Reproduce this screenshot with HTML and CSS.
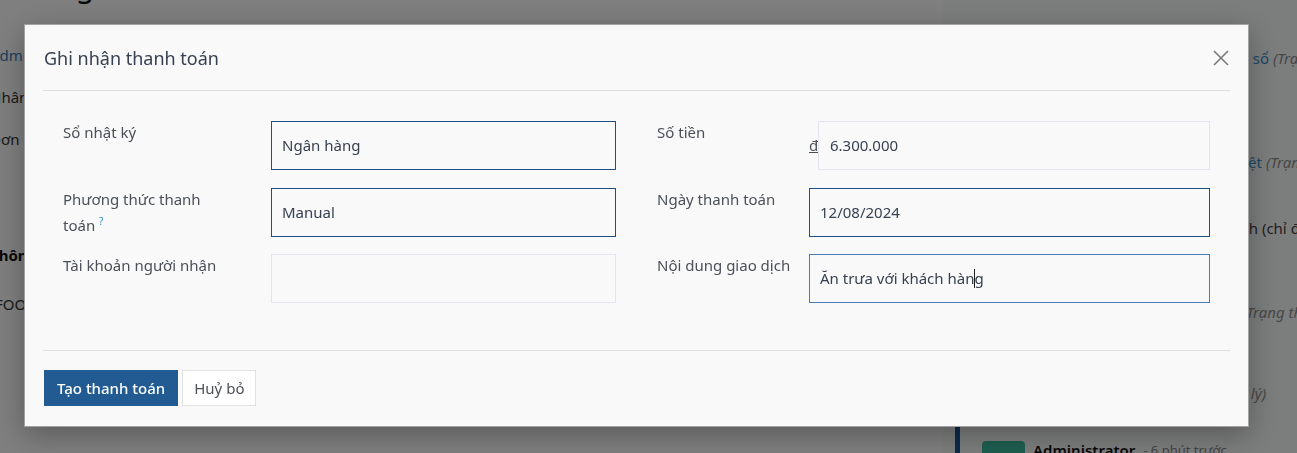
FILE: index.html
```html
<!DOCTYPE html>
<html>
<head>
    <meta charset="utf-8">
    <title>Ghi nhận thanh toán</title>
    <meta name="viewport" content="width=device-width, initial-scale=1.0">
    <link rel="stylesheet" href="styles.css">
</head>
<body>
    <div class="page">
        <div class="main">
            <div class="sheet">
                <h1 class="rec-title">Công tác Hà Tĩnh</h1>
                <p class="rec-line rec-link rec-owner">Administrator</p>
                <p class="rec-line rec-gap">Nhân viên</p>
                <p class="rec-line rec-gap">Đơn nhà cung cấp</p>
                <p class="rec-line rec-bold rec-section">Thông tin mua hàng</p>
                <p class="rec-line rec-gap2">[FOOD] Chi phí ăn uống</p>
            </div>
        </div>
        <div class="chatter">
            <div class="thread">
                <p class="track track-1"><span class="tk-main w1">• Đã phê duyệt → <span class="tk-link">Đã vào sổ</span></span> <em>(Trạng thái)</em></p>
                <p class="track track-2"><span class="tk-main w2">• Đã gửi → <span class="tk-link">Đã phê duyệt</span></span> <em>(Trạng thái)</em></p>
                <p class="track track-3"><span class="tk-main w3">• Còn lại theo ngân sách</span> (chỉ đọc)</p>
                <p class="track track-4"><em><span class="tk-main w4">Bản nháp → Đã gửi</span> (Trạng thái)</em></p>
                <p class="track track-5"><em><span class="tk-main w5">Chi phí nhân viên (Đã xử lý)</span></em></p>
                <div class="author">
                    <span class="avatar"></span>
                    <span class="author-name">Administrator</span>
                    <span class="author-time">- 6 phút trước</span>
                </div>
            </div>
        </div>
    </div>

    <div class="backdrop">
        <div class="dialog">
            <div class="dlg-header">
                <h4 class="dlg-title">Ghi nhận thanh toán</h4>
                <button class="dlg-close" aria-label="Đóng">
                    <svg width="16" height="16" viewBox="0 0 16 16">
                        <path d="M1 1 L15 15 M15 1 L1 15" stroke="#7a7a7a" stroke-width="1.6" fill="none"/>
                    </svg>
                </button>
            </div>

            <div class="dlg-body">
                <div class="grp grp-left">
                    <label class="lbl">Sổ nhật ký</label>
                    <div class="field field-focus">Ngân hàng</div>

                    <label class="lbl">Phương thức thanh toán <sup class="help">?</sup></label>
                    <div class="field field-focus">Manual</div>

                    <label class="lbl">Tài khoản người nhận</label>
                    <div class="field field-muted"></div>
                </div>

                <div class="grp grp-right">
                    <label class="lbl">Số tiền</label>
                    <div class="monetary">
                        <span class="currency">đ</span>
                        <div class="field field-muted">6.300.000</div>
                    </div>

                    <label class="lbl">Ngày thanh toán</label>
                    <div class="field field-focus">12/08/2024</div>

                    <label class="lbl">Nội dung giao dịch</label>
                    <div class="field field-edit">Ăn trưa với khách hàn<span class="caret"></span>g</div>
                </div>
            </div>

            <div class="dlg-footer">
                <button class="btn btn-primary">Tạo thanh toán</button>
                <button class="btn btn-light">Huỷ bỏ</button>
            </div>
        </div>
    </div>
</body>
</html>
```

FILE: styles.css
```css
* {
    box-sizing: border-box;
}
html, body {
    margin: 0;
    height: 100%;
}
body {
    font-family: "Noto Sans", "Open Sans", sans-serif;
    font-size: 15px;
    line-height: 1.5;
    color: #374151;
    background: #fff;
    overflow: hidden;
}

/* page behind the dialog */
.page {
    display: flex;
    height: 453px;
    white-space: nowrap;
}
.main {
    flex: 0 0 943px;
    overflow: hidden;
}
.sheet {
    margin-left: -10px;
}
.rec-title {
    font-size: 30px;
    font-weight: 400;
    line-height: 36px;
    margin: -32px 0 0 30px;
    color: #111;
}
.rec-line {
    margin: 0;
    height: 22px;
    line-height: 22px;
    color: #333;
}
.rec-link {
    color: #3a7fb8;
}
.rec-bold {
    font-weight: 700;
    color: #111;
}
.rec-owner { margin-top: 40px; }
.rec-gap { margin-top: 20px; }
.rec-section { margin-top: 94px; }
.rec-gap2 { margin-top: 27px; }

.chatter {
    flex: 1;
    background: #f9fafb;
    padding-left: 12px;
    overflow: hidden;
}
.thread {
    border-left: 5px solid #1a549a;
    padding-left: 22px;
    height: 100%;
}
.track {
    margin: 0;
    height: 22px;
    line-height: 22px;
    color: #444;
}
.track em {
    color: #8f8f8f;
}
.tk-main {
    display: inline-block;
    text-align: right;
}
.w1 { width: 287px; }
.w2 { width: 280px; }
.w3 { width: 276px; }
.w4 { width: 256px; }
.w5 { width: 284px; }
.tk-link {
    color: #3a8fc4;
}
.track-1 { margin-top: 47px; }
.track-2 { margin-top: 82px; }
.track-3 { margin-top: 44px; }
.track-4 { margin-top: 62px; }
.track-5 { margin-top: 59px; }
.author {
    display: flex;
    align-items: flex-start;
    gap: 8px;
    margin-top: 37px;
}
.avatar {
    width: 43px;
    height: 36px;
    border-radius: 4px;
    background: #3cbca0;
}
.author-name {
    font-weight: 600;
    color: #111;
    line-height: 18px;
}
.author-time {
    font-size: 13px;
    color: #888;
    line-height: 18px;
}

/* modal */
.backdrop {
    position: fixed;
    inset: 0;
    background: rgba(0, 0, 0, 0.5);
    padding: 24px 0 0 24px;
}
.dialog {
    width: 1225px;
    background: #f9f9f9;
    border: 1px solid rgba(0, 0, 0, 0.35);
    box-shadow: 0 8px 28px rgba(0, 0, 0, 0.3);
}
.dlg-header {
    margin: 0 18px;
    height: 66px;
    border-bottom: 1px solid #dedede;
    display: flex;
    align-items: center;
    justify-content: space-between;
}
.dlg-title {
    margin: 1px 0 0 1px;
    font-size: 18px;
    font-weight: 400;
    color: #374151;
}
.dlg-close {
    border: 0;
    background: none;
    padding: 0;
    margin-right: 1px;
    width: 16px;
    height: 16px;
    cursor: pointer;
}
.dlg-close svg {
    display: block;
}

.dlg-body {
    margin: 0 18px;
    padding: 30px 20px 47px;
    display: grid;
    grid-template-columns: 1fr 1fr;
    column-gap: 41px;
}
.grp {
    display: grid;
    row-gap: 17.5px;
    align-items: start;
}
.grp-left {
    grid-template-columns: 208px 1fr;
}
.grp-right {
    grid-template-columns: 152px 1fr;
}
.lbl {
    max-width: 168px;
    color: #4b5058;
    line-height: 22.5px;
    white-space: normal;
}
.help {
    color: #2b8fc0;
    font-size: 10px;
}
.field {
    height: 49px;
    border: 1px solid #e3e4ef;
    padding: 0 10px;
    display: flex;
    align-items: center;
    color: #374151;
    white-space: nowrap;
}
.field-focus {
    border-color: #1e4f80;
}
.field-edit {
    border-color: #4a7fb2;
}
.field-muted {
    border-color: #e3e4ef;
}
.monetary {
    display: flex;
    align-items: center;
}
.monetary .field {
    flex: 1;
    padding-left: 11px;
}
.currency {
    width: 9px;
    color: #4b5058;
    text-decoration: underline;
}
.caret {
    display: inline-block;
    width: 1px;
    height: 19px;
    background: #222;
    margin-right: -1px;
}

.dlg-footer {
    margin: 0 18px;
    border-top: 1px solid #dedede;
    padding: 19px 1px 20px;
    display: flex;
    gap: 4px;
}
.btn {
    height: 36px;
    font-family: inherit;
    font-size: 15px;
    padding: 0 12px;
    border-radius: 0;
    cursor: pointer;
}
.btn-primary {
    background: #215b92;
    border: 1px solid #215b92;
    color: #fff;
    font-weight: 500;
}
.btn-light {
    background: #fff;
    border: 1px solid #e2e2e2;
    color: #4b5058;
    padding: 0 11px;
}
```
